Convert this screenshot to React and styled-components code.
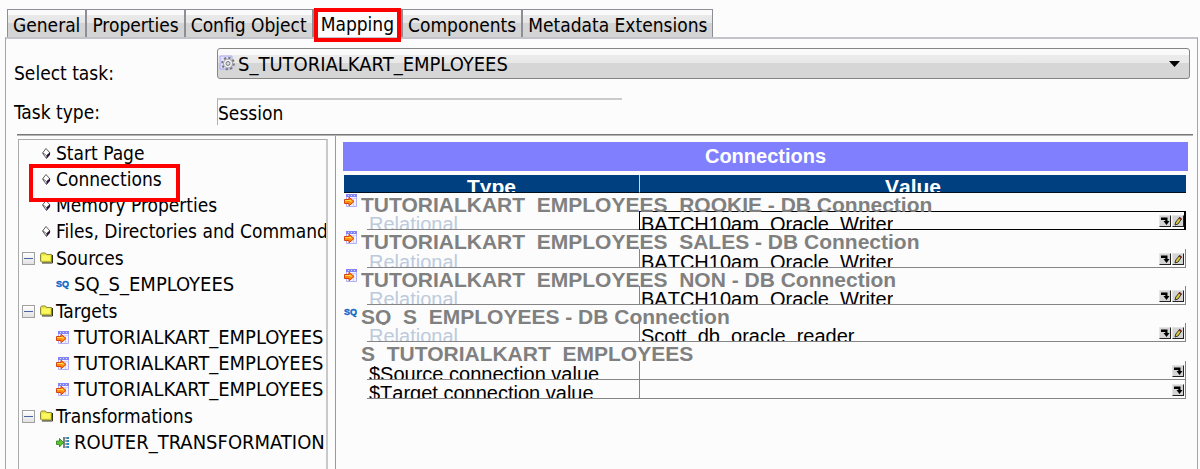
import React, { useState } from "react";
import styled, { createGlobalStyle, css } from "styled-components";

const GlobalStyle = createGlobalStyle`
  *, *::before, *::after {
    box-sizing: border-box;
  }

  body {
    margin: 0;
    background: #fcfcfc;
    color: #000;
    font-family: "DejaVu Sans Condensed", "DejaVu Sans", sans-serif;
    font-size: 19px;
  }

  button, input, select {
    font: inherit;
    color: inherit;
  }
`;

const Page = styled.div`
  min-height: 100vh;
  padding: 9px 2px 0 5px;
  display: flex;
  flex-direction: column;
`;

const TabBar = styled.div`
  display: flex;
  padding-left: 2px;
  height: 28px;
`;

const Tab = styled.button`
  position: relative;
  height: 28px;
  padding: 0 5px;
  line-height: 30px;
  white-space: nowrap;
  border: 1px solid #8e8e99;
  border-bottom: 0;
  background: ${({ $active }) =>
    $active ? "#fcfcfc" : "linear-gradient(#fafafa 20%, #e9e9e9 20%, #e6e6e6 50%, #d4d4d4 50%)"};
`;

const highlight = css`
  content: "";
  position: absolute;
  border: 4px solid #fe0000;
  pointer-events: none;
  z-index: 1;
`;

const MarkedTab = styled(Tab)`
  padding: 0 7px;
  line-height: 26px;

  &::after {
    ${highlight}
    inset: -2px 0 -5px;
  }
`;

const Panel = styled.div`
  flex: 1;
  display: flex;
  flex-direction: column;
  border: 1px solid #a3a3a8;
  border-top: 2px solid #c3c3cb;
  border-bottom: 0;
  padding-top: 9px;
`;

const TaskForm = styled.form`
  display: grid;
  grid-template-columns: 203px 1fr;
  row-gap: 12px;
  padding: 0 7px 9px 8px;
`;

const Label = styled.label`
  align-self: end;
  line-height: 26px;
`;

const SelectWrapper = styled.div`
  position: relative;
  margin-bottom: 7px;

  svg {
    position: absolute;
    pointer-events: none;
  }
`;

const Select = styled.select`
  appearance: none;
  display: block;
  width: 100%;
  height: 31px;
  padding: 0 24px 0 20px;
  border: 1px solid #858585;
  border-radius: 3px;
  font-size: 20px;
  background: linear-gradient(#fafafa 22%, #ebebeb 22%, #e9e9e9 48%, #d6d6d6 48%);
`;

const SelectIcon = styled.svg`
  left: 2px;
  top: 7px;
`;

const Caret = styled.svg`
  right: 10px;
  top: 13px;
`;

const TypeInput = styled.input`
  width: 405px;
  max-width: 100%;
  height: 27px;
  padding: 0;
  border: 0;
  border-top: 2px solid #cbcbcb;
  border-left: 1px solid #b0b0b0;
  background: transparent;
  outline: 0;
`;

const Divider = styled.hr`
  width: auto;
  margin: 0 4px 0 11px;
  border: 0;
  border-top: 1px solid #777;
  border-bottom: 1px solid #b5b5b5;
`;

const Body = styled.div`
  flex: 1;
  display: flex;
  gap: 7px;
  padding: 0 9px 0 12px;
`;

const TreePane = styled.nav`
  flex: 0 0 310px;
  margin-top: 3px;
  overflow: hidden;
  border: 1px solid #aaa;
  border-right: 2px solid #c9c9c9;
  border-bottom: 0;
`;

const Tree = styled.ul`
  margin: 0;
  padding: 0;
  list-style: none;
`;

const Branch = styled.li`
  margin-top: ${({ $folder }) => ($folder ? "1px" : "0")};
`;

const Row = styled.div`
  position: relative;
  display: flex;
  align-items: center;
  height: 26px;
  padding-left: ${({ $indent }) => $indent}px;
  gap: ${({ $gap }) => $gap || 5}px;
  white-space: nowrap;

  svg {
    flex: none;
  }
`;

const MarkedRow = styled(Row)`
  &::after {
    ${highlight}
    left: 10px;
    top: -2px;
    width: 151px;
    height: 38px;
  }
`;

const TreeLink = styled.a`
  color: inherit;
  text-decoration: none;
  font-size: ${({ $caps }) => ($caps ? "20px" : "19px")};
`;

const Toggle = styled.button`
  width: 13px;
  height: 13px;
  margin-right: 2px;
  padding: 0;
  display: flex;
  align-items: center;
  justify-content: center;
  border: 1px solid #a0a0a0;
  background: linear-gradient(#fff, #e2e2e2);

  &::before {
    content: "";
    width: 9px;
    height: 1px;
    background: #4a64a8;
  }
`;

const GridPane = styled.main`
  flex: 1;
  min-width: 0;
  padding: 6px 0 0 7px;
  border-left: 1px solid #9a9a9a;
  font-family: "Liberation Sans", Arial, sans-serif;
  font-size: 20px;
`;

const GridTitle = styled.h1`
  margin: 0 0 4px;
  height: 29px;
  line-height: 29px;
  font-size: 20px;
  text-align: center;
  color: #fff;
  background: #8080ff;
`;

const GridWrapper = styled.div`
  padding: 0 2px 0 1px;
`;

const Grid = styled.table`
  width: 100%;
  height: 224px;
  table-layout: fixed;
  border-collapse: separate;
  border-spacing: 0;
  font-kerning: none;

  th, td {
    padding: 0;
    vertical-align: top;
  }
`;

const HeadCell = styled.th`
  height: 18px;
  color: #fff;
  background: #004080;
  border-bottom: 1px solid #001020;
  border-left: ${({ $split }) => ($split ? "1px solid #cfd8e2" : "0")};
`;

const Clip = styled.div`
  height: 18px;
  line-height: 26px;
  overflow: hidden;
  white-space: nowrap;
  font-size: ${({ $bold }) => ($bold ? "21px" : "20px")};
`;

const HeadText = styled(Clip)`
  height: 17px;
  line-height: 24px;
`;

const GroupCell = styled.th`
  text-align: left;
  color: #808080;
`;

const GroupLine = styled.div`
  display: grid;
  grid-template-columns: 13px 1fr;
  column-gap: 4px;
  height: 18px;

  svg {
    margin-top: 1px;
  }
`;

const GroupText = styled(Clip)`
  grid-column: 2;
  height: 20px;
  line-height: 24px;
  font-kerning: normal;
`;

const TypeCell = styled.td`
  border-bottom: 1px solid #858585;
  color: ${({ $muted }) => ($muted ? "#bccbdc" : "#000")};

  > div {
    padding-left: 2px;
  }
`;

const ValueCell = styled.td`
  height: 18px;
  border-bottom: 1px solid #858585;
  border-left: 1px solid #858585;
  border-right: 1px solid #858585;
  ${({ $selected }) =>
    $selected &&
    css`
      border-color: #000;
      box-shadow: inset 0 1px #000, inset -1px 0 #000;
    `}
`;

const ValueLine = styled.div`
  display: flex;
  justify-content: space-between;
  padding: 0 1px;
`;

const Actions = styled.div`
  display: flex;
  gap: 1px;
  padding-top: 4px;
`;

const ActionButton = styled.button`
  width: 12px;
  height: 12px;
  padding: 0;
  display: block;
  line-height: 0;
  background: #d4d4d4;
  border: 1px solid #e4e4e4;
  border-right-color: #222;
  border-bottom-color: #222;
`;

const DiamondIcon = () => (
  <svg width="9" height="11" viewBox="0 0 9 11">
    <path d="M4 .5 8 5 4.5 10.5 .5 5z" fill="#fff" stroke="#333" strokeWidth=".8" />
    <path d="M8 4.5v2.5l-3.5 3.5v-3z" fill="#2c0a38" />
    <path d="M1 5l3.5 2.5L8 4.5" fill="none" stroke="#333" strokeWidth=".7" />
  </svg>
);

const FolderIcon = () => (
  <svg width="13" height="12" viewBox="0 0 13 12">
    <path d="M.5 2.5 1.5 1h4l1 1.5h5V10h-10l-1-1z" fill="#e9e43c" stroke="#8b8840" />
    <path d="M2 3.5h8v5H2z" fill="#fbf95e" />
    <path d="M12.5 3v8H2" fill="none" stroke="#33331a" />
  </svg>
);

const SqIcon = () => (
  <svg width="13" height="12" viewBox="0 0 13 12">
    <text
      x="0"
      y="9"
      fontFamily="Liberation Sans Narrow, Liberation Sans, sans-serif"
      fontSize="9"
      fontWeight="700"
      fill="#0a66c8"
      stroke="#0a66c8"
      strokeWidth=".4"
    >
      SQ
    </text>
  </svg>
);

const TargetIcon = () => (
  <svg width="13" height="13" viewBox="0 0 13 13">
    <path d="M2.5 .5h10v12h-10z" fill="#f2f2ff" stroke="#b0b0f6" />
    <path d="M2 1.500h11" stroke="#8484f4" strokeWidth="3" />
    <path d="M4 1.500h8" stroke="#d8d8ff" strokeDasharray="1 2" />
    <path d="M4 4.5h8M9.5 4v8" stroke="#d0d0fa" />
    <path d="M.5 5.500H5V3.200L10 7.500l-5 4.300V9.500H.5z" fill="#ff8c10" stroke="#d8400e" />
    <path d="M1 6.500h5l1.500 1" fill="none" stroke="#ffe048" strokeWidth="1.200" />
  </svg>
);

const RouterIcon = () => (
  <svg width="13" height="13" viewBox="0 0 13 13">
    <path d="M.5 5h3V2.500l4 4-4 4.500V8.500h-3z" fill="#5cc52e" stroke="#28791c" strokeWidth=".8" />
    <path d="M8 1v11" stroke="#555" strokeWidth="1.500" />
    <path d="M9 2h2M9 5h2M9 8h2M9 11h2" stroke="#666" />
    <path d="M10.500 2H13M10.500 5H13M10.500 8H13M10.500 11H13" stroke="#268ac4" strokeWidth="2" />
  </svg>
);

const GearIcon = () => (
  <SelectIcon width="16" height="16" viewBox="0 0 16 16">
    <path d="M1 1h12v13H1z" fill="#e0e0ff" stroke="#aaaaf0" />
    <circle cx="9" cy="8.500" r="5.800" fill="none" stroke="#777" strokeWidth="2" strokeDasharray="2.200 2.300" />
    <circle cx="9" cy="8.500" r="4.500" fill="#f4f4f4" stroke="#999" />
    <circle cx="9" cy="8.500" r="2" fill="#d8d8f8" stroke="#777" />
  </SelectIcon>
);

const OpenIcon = () => (
  <svg width="10" height="10" viewBox="0 0 10 10">
    <path d="M1 1.500h6.500V5H9.500L6.500 9 3.500 5H5.300V4H1z" fill="#000" />
  </svg>
);

const PencilIcon = () => (
  <svg width="10" height="10" viewBox="0 0 10 10">
    <path d="M2 9l.8-3L6.500 1.500l2 1.500L5 8z" fill="#d9cf3a" stroke="#222" strokeWidth=".9" />
    <path d="M6.500 1l2.300 1.700-1 1.300-2.300-1.800z" fill="#7a1c1c" />
  </svg>
);

const TABS = ["General", "Properties", "Config Object", "Mapping", "Components", "Metadata Extensions"];

const PAGES = ["Start Page", "Connections", "Memory Properties", "Files, Directories and Commands"];

const FOLDERS = [
  { name: "Sources", icon: SqIcon, items: ["SQ_S_EMPLOYEES"] },
  {
    name: "Targets",
    icon: TargetIcon,
    items: ["TUTORIALKART_EMPLOYEES", "TUTORIALKART_EMPLOYEES", "TUTORIALKART_EMPLOYEES"],
  },
  { name: "Transformations", icon: RouterIcon, items: ["ROUTER_TRANSFORMATION"] },
];

const WRITER = "BATCH10am_Oracle_Writer";

const GROUPS = [
  {
    name: "TUTORIALKART_EMPLOYEES_ROOKIE - DB Connection",
    icon: TargetIcon,
    rows: [{ type: "Relational", value: WRITER, selected: true }],
  },
  {
    name: "TUTORIALKART_EMPLOYEES_SALES - DB Connection",
    icon: TargetIcon,
    rows: [{ type: "Relational", value: WRITER }],
  },
  {
    name: "TUTORIALKART_EMPLOYEES_NON - DB Connection",
    icon: TargetIcon,
    rows: [{ type: "Relational", value: WRITER }],
  },
  {
    name: "SQ_S_EMPLOYEES - DB Connection",
    icon: SqIcon,
    rows: [{ type: "Relational", value: "Scott_db_oracle_reader" }],
  },
  {
    name: "S_TUTORIALKART_EMPLOYEES",
    rows: [{ type: "$Source connection value" }, { type: "$Target connection value" }],
  },
];

const Folder = ({ folder }) => {
  const [open, setOpen] = useState(true);
  const Icon = folder.icon;

  return (
    <Branch $folder>
      <Row $indent={3} $gap={3}>
        <Toggle
          type="button"
          aria-label={`Toggle ${folder.name}`}
          aria-expanded={open}
          onClick={() => setOpen(!open)}
        />
        <FolderIcon />
        <TreeLink href="#">{folder.name}</TreeLink>
      </Row>
      {open && (
        <Tree>
          {folder.items.map((item, index) => (
            <Branch key={index}>
              <Row $indent={37}>
                <Icon />
                <TreeLink href="#" $caps>
                  {item}
                </TreeLink>
              </Row>
            </Branch>
          ))}
        </Tree>
      )}
    </Branch>
  );
};

const ValueRow = ({ row }) => (
  <tr>
    <td />
    <TypeCell $muted={row.value}>
      <Clip>{row.type}</Clip>
    </TypeCell>
    <ValueCell $selected={row.selected}>
      <ValueLine>
        <Clip>{row.value}</Clip>
        <Actions>
          <ActionButton type="button" aria-label="Open">
            <OpenIcon />
          </ActionButton>
          {row.value && (
            <ActionButton type="button" aria-label="Edit">
              <PencilIcon />
            </ActionButton>
          )}
        </Actions>
      </ValueLine>
    </ValueCell>
  </tr>
);

const Connections = () => (
  <GridPane>
    <GridTitle>Connections</GridTitle>
    <GridWrapper>
      <Grid>
        <colgroup>
          <col width="23" />
          <col width="272" />
          <col />
        </colgroup>
        <thead>
          <tr>
            <HeadCell colSpan={2}>
              <HeadText $bold>Type</HeadText>
            </HeadCell>
            <HeadCell $split>
              <HeadText $bold>Value</HeadText>
            </HeadCell>
          </tr>
        </thead>
        {GROUPS.map((group) => (
          <tbody key={group.name}>
            <tr>
              <GroupCell colSpan={3}>
                <GroupLine>
                  {group.icon && <group.icon />}
                  <GroupText $bold>{group.name}</GroupText>
                </GroupLine>
              </GroupCell>
            </tr>
            {group.rows.map((row) => (
              <ValueRow key={row.type} row={row} />
            ))}
          </tbody>
        ))}
      </Grid>
    </GridWrapper>
  </GridPane>
);

export default function App() {
  return (
    <>
      <GlobalStyle />
      <Page>
        <TabBar role="tablist">
          {TABS.map((name) => {
            const active = name === "Mapping";
            const Item = active ? MarkedTab : Tab;
            return (
              <Item key={name} type="button" role="tab" aria-selected={active} $active={active}>
                {name}
              </Item>
            );
          })}
        </TabBar>
        <Panel>
          <TaskForm>
            <Label htmlFor="task">Select task:</Label>
            <SelectWrapper>
              <Select id="task">
                <option>S_TUTORIALKART_EMPLOYEES</option>
              </Select>
              <GearIcon />
              <Caret width="11" height="6" viewBox="0 0 11 6">
                <path d="M0 0h11L5.500 6z" />
              </Caret>
            </SelectWrapper>
            <Label htmlFor="task-type">Task type:</Label>
            <TypeInput id="task-type" value="Session" readOnly />
          </TaskForm>
          <Divider />
          <Body>
            <TreePane>
              <Tree>
                {PAGES.map((page) => {
                  const Item = page === "Connections" ? MarkedRow : Row;
                  return (
                    <Branch key={page}>
                      <Item $indent={23}>
                        <DiamondIcon />
                        <TreeLink href="#">{page}</TreeLink>
                      </Item>
                    </Branch>
                  );
                })}
                {FOLDERS.map((folder) => (
                  <Folder key={folder.name} folder={folder} />
                ))}
              </Tree>
            </TreePane>
            <Connections />
          </Body>
        </Panel>
      </Page>
    </>
  );
}
